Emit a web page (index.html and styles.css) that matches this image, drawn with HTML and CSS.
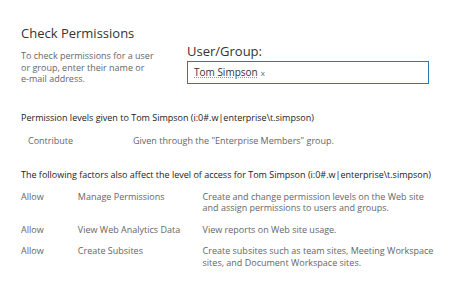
FILE: index.html
```html
<!DOCTYPE html>
<html lang="en">
<head>
    <meta charset="UTF-8">
    <title>Check Permissions</title>
    <link rel="stylesheet" href="styles.css">
</head>
<body>
    <div class="page">
        <div class="top">
            <div class="intro">
                <h1>Check Permissions</h1>
                <p>To check permissions for a user or group, enter their name or <span class="nowrap">e-mail</span> address.</p>
            </div>
            <div class="picker">
                <label for="user">User/Group:</label>
                <div class="input-box" id="user">
                    <span class="entity">Tom Simpson</span><span class="remove">x</span>
                </div>
            </div>
        </div>

        <h2>Permission levels given to Tom Simpson (i:0#.w|enterprise\t.simpson)</h2>
        <div class="level-row">
            <span class="level-name">Contribute</span>
            <span class="level-desc">Given through the "Enterprise Members" group.</span>
        </div>

        <h2 class="factors-title">The following factors also affect the level of access for Tom Simpson (i:0#.w|enterprise\t.simpson)</h2>
        <div class="factor">
            <span class="f-type">Allow</span>
            <span class="f-name">Manage Permissions</span>
            <span class="f-desc">Create and change permission levels on the Web site and assign permissions to users and groups.</span>
        </div>
        <div class="factor">
            <span class="f-type">Allow</span>
            <span class="f-name">View Web Analytics Data</span>
            <span class="f-desc">View reports on Web site usage.</span>
        </div>
        <div class="factor">
            <span class="f-type">Allow</span>
            <span class="f-name">Create Subsites</span>
            <span class="f-desc">Create subsites such as team sites, Meeting Workspace sites, and Document Workspace sites.</span>
        </div>
    </div>
</body>
</html>
```

FILE: styles.css
```css
body {
    font-family: 'Open Sans', 'Noto Sans', sans-serif;
    background-color: rgb(255, 255, 255);
    color: rgb(68, 68, 68);
    margin: 0;
    padding: 0;
}
.page {
    padding: 24px 10px 0 21px;
}
.top {
    display: flex;
}
.intro {
    width: 166px;
}
h1 {
    font-size: 13px;
    font-weight: normal;
    color: rgb(51, 51, 51);
    margin: 0 0 8px 0;
    line-height: 18px;
}
.intro p {
    font-size: 9px;
    color: rgb(102, 102, 102);
    line-height: 11.5px;
    margin: 0;
    width: 135px;
}
.nowrap {
    white-space: nowrap;
}
.picker {
    margin-top: 19px;
    flex: 1;
}
label {
    display: block;
    font-size: 13px;
    color: rgb(51, 51, 51);
    line-height: 16px;
    margin-bottom: 2px;
}
.input-box {
    width: 234px;
    height: 21px;
    border: 1px solid rgb(43, 120, 180);
    font-size: 10px;
    line-height: 21px;
    padding-left: 6px;
}
.entity {
    color: rgb(51, 51, 51);
    text-decoration: underline dotted rgb(150, 150, 150);
}
.remove {
    margin-left: 3px;
    font-size: 8px;
    color: rgb(110, 110, 110);
}
h2 {
    font-size: 9px;
    font-weight: normal;
    color: rgb(34, 34, 34);
    margin: 27px 0 0 0;
    line-height: 12px;
    white-space: nowrap;
}
.level-row {
    display: flex;
    font-size: 9px;
    color: rgb(102, 102, 102);
    margin: 10px 0 0 7px;
}
.level-name {
    width: 105px;
}
.factors-title {
    margin-top: 22px;
}
.factor {
    display: flex;
    font-size: 9px;
    color: rgb(102, 102, 102);
    line-height: 11.5px;
    margin-top: 10px;
}
.f-type {
    width: 57px;
}
.f-name {
    width: 125px;
}
.f-desc {
    width: 238px;
}
```
